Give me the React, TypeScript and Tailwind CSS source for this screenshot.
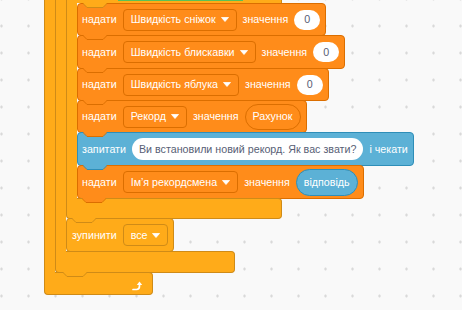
import React from 'react';

const Tab = ({ fill, stroke, className = 'left-[5px]' }: { fill: string; stroke: string; className?: string }) => (
  <svg className={`absolute -top-px ${className}`} width="24" height="5" viewBox="0 0 24 5">
    <polygon points="0,0 4,4 20,4 24,0" fill={fill} />
    <polyline points="0,0.5 4,4.5 20,4.5 24,0.5" fill="none" stroke={stroke} strokeWidth="1" />
  </svg>
);

const Label = ({ children }: { children: React.ReactNode }) => (
  <span className="text-[10.7px] leading-none text-white whitespace-nowrap">{children}</span>
);

const Caret = () => (
  <svg width="8" height="5" viewBox="0 0 8 5">
    <polygon points="0.5,0.5 7.5,0.5 4,4.5" fill="#fff" stroke="#fff" strokeLinejoin="round" strokeWidth="0.8" />
  </svg>
);

const Dropdown = ({ label, border = 'border-[#DB6E00]' }: { label: string; border?: string }) => (
  <span className={`flex items-center gap-[5px] h-[22px] px-[7px] rounded-[4px] border ${border}`}>
    <Label>{label}</Label>
    <Caret />
  </span>
);

const Zero = () => (
  <span className="flex items-center justify-center w-[26px] h-[20px] rounded-full bg-white text-[10.7px] leading-none text-[#575E75]">
    0
  </span>
);

const Arm = () => <div className="w-[11px] shrink-0 bg-[#FFAB19] border-l border-[#CF8B17]" />;

function BottomArm({ className, children }: { className: string; children?: React.ReactNode }) {
  return (
    <div className={`flex -mt-px ${className}`}>
      <div className="w-[11px] bg-[#FFAB19] border-l border-b border-[#CF8B17] rounded-bl-[4px]" />
      <div className="relative flex-1 flex items-end justify-end bg-[#FFAB19] border-t border-r border-b border-[#CF8B17] rounded-r-[4px]">
        {children}
      </div>
    </div>
  );
}

const SetBlock = ({
  h,
  tab,
  field,
  children,
}: {
  h: string;
  tab: React.ReactNode;
  field: string;
  children: React.ReactNode;
}) => (
  <div className={`relative flex items-center gap-[6px] pl-[4px] pr-[5px] bg-[#FF8C1A] border border-[#DB6E00] rounded-[4px] ${h}`}>
    {tab}
    <Label>надати</Label>
    <Dropdown label={field} />
    <Label>значення</Label>
    {children}
  </div>
);

const orangeTab = <Tab fill="#FF8C1A" stroke="#DB6E00" />;

export default function App() {
  return (
    <div className="w-[462px] h-[310px] overflow-hidden bg-[#F9F9F9] bg-[radial-gradient(circle,#d9d9d9_1px,transparent_1.5px)] bg-[size:27px_27px] bg-[position:-12px_-14.5px] font-['Liberation_Sans',Arial,sans-serif]">
      <div className="pl-[44px] flex flex-col items-start">
        {/* forever */}
        <div className="flex">
          <Arm />
          <div className="flex flex-col items-start">
            {/* second C */}
            <div className="flex">
              <Arm />
              <div className="flex flex-col items-start">
                {/* if block */}
                <div className="w-[216px] h-[3px] bg-[#FFAB19] border-l border-r border-[#CF8B17]">
                  <div className="ml-[51px] w-[125px] h-[1px] bg-[#59C059]" />
                </div>
                <div className="flex">
                  <Arm />
                  <div className="flex flex-col items-start">
                    <SetBlock h="h-[33px]" tab={<Tab fill="#FFAB19" stroke="#CF8B17" />} field="Швидкість сніжок">
                      <Zero />
                    </SetBlock>
                    <SetBlock h="h-[34px] -mt-px" tab={orangeTab} field="Швидкість блискавки">
                      <Zero />
                    </SetBlock>
                    <SetBlock h="h-[33px] -mt-px" tab={orangeTab} field="Швидкість яблука">
                      <Zero />
                    </SetBlock>
                    <SetBlock h="h-[33px] -mt-px" tab={orangeTab} field="Рекорд">
                      <span className="flex items-center h-[26px] px-[7px] rounded-full bg-[#FF8C1A] border border-[#DB6E00]">
                        <Label>Рахунок</Label>
                      </span>
                    </SetBlock>
                    <div className="relative flex items-center gap-[6px] h-[34px] -mt-px pl-[4px] pr-[5px] bg-[#5CB1D6] border border-[#2E8EB8] rounded-[4px]">
                      {orangeTab}
                      <Label>запитати</Label>
                      <span className="flex items-center h-[22px] px-[7px] rounded-full bg-white text-[10.7px] leading-none text-[#575E75] whitespace-nowrap">
                        Ви встановили новий рекорд. Як вас звати?
                      </span>
                      <Label>і чекати</Label>
                    </div>
                    <SetBlock h="h-[34px] -mt-px" tab={<Tab fill="#5CB1D6" stroke="#2E8EB8" />} field="Ім’я рекордсмена">
                      <span className="flex items-center h-[27px] px-[7px] rounded-full bg-[#5CB1D6] border border-[#2E8EB8]">
                        <Label>відповідь</Label>
                      </span>
                    </SetBlock>
                  </div>
                </div>
                <BottomArm className="w-[216px] h-[21px]">
                  <Tab fill="#FF8C1A" stroke="#DB6E00" className="left-[5px]" />
                </BottomArm>
                {/* stop */}
                <div className="relative flex items-center gap-[6px] h-[34px] -mt-px pl-[5px] pr-[5px] bg-[#FFAB19] border border-[#CF8B17] rounded-[4px]">
                  <Tab fill="#FFAB19" stroke="#CF8B17" className="left-[5px]" />
                  <Label>зупинити</Label>
                  <Dropdown label="все" border="border-[#CF8B17]" />
                </div>
              </div>
            </div>
            <BottomArm className="w-[180px] h-[22px]" />
          </div>
        </div>
        <BottomArm className="w-[109px] h-[23px]">
          <Tab fill="#FFAB19" stroke="#CF8B17" className="left-[8px]" />
          <svg className="mr-[9px] mb-[3px]" width="11" height="10" viewBox="0 0 11 10">
            <path d="M1 8.5 H4.5 Q7.5 8.5 7.5 5 V3.5" fill="none" stroke="#fff" strokeWidth="1.7" strokeLinecap="round" />
            <polygon points="4.8,4 7.5,0.6 10.2,4" fill="#fff" />
          </svg>
        </BottomArm>
      </div>
    </div>
  );
}
